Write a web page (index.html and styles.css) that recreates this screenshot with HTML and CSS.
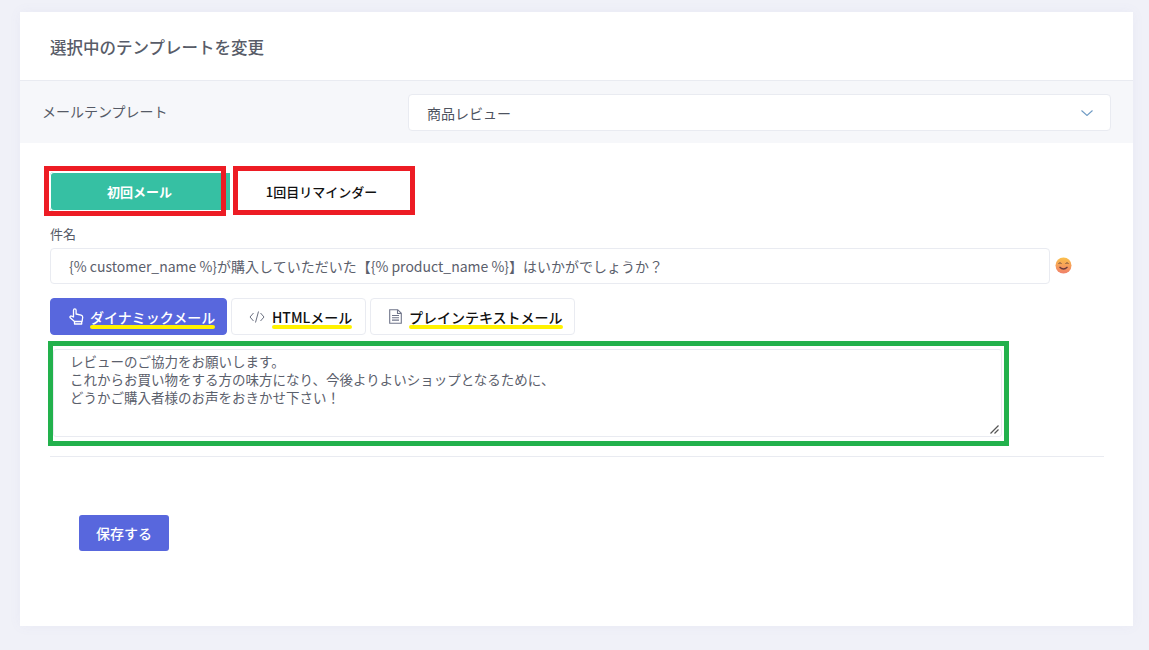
FILE: index.html
```html
<!DOCTYPE html>
<html lang="ja">
<head>
<meta charset="utf-8">
<title>選択中のテンプレートを変更</title>
<link rel="stylesheet" href="styles.css">
</head>
<body>
<main class="card">
  <h1 class="card-title">選択中のテンプレートを変更</h1>
  <section class="template-row">
    <span class="template-label">メールテンプレート</span>
    <div class="select">
      <span>商品レビュー</span>
      <svg class="chevron" width="12" height="6" viewBox="0 0 12 6"><path d="M.5.5 6 5.5 11.5.5" fill="none" stroke="#6f9bc4" stroke-width="1.1"/></svg>
    </div>
  </section>
  <section class="body">
    <div class="steps">
      <div class="step step-active">初回メール<i class="mark mark-a"></i></div>
      <div class="step">1回目リマインダー<i class="mark mark-b"></i></div>
    </div>
    <label class="subject-label">件名</label>
    <div class="subject-row">
      <div class="subject">{% customer_name %}が購入していただいた【{% product_name %}】はいかがでしょうか？</div>
      <svg class="emoji" width="17" height="17" viewBox="0 0 17 17">
        <defs><linearGradient id="f" x1="0" y1="0" x2="0" y2="1"><stop offset="0" stop-color="#fbc04a"/><stop offset="1" stop-color="#f0806a"/></linearGradient></defs>
        <circle cx="8.5" cy="8.5" r="8" fill="url(#f)"/>
        <path d="M3.5 7 5 5.5 6.5 7M10.5 7 12 5.5 13.5 7" fill="none" stroke="#6b4a3a" stroke-width="1"/>
        <path d="M4.5 10q4 4 8 0" fill="none" stroke="#6b3a3a" stroke-width="1.2"/>
      </svg>
    </div>
    <div class="tabs">
      <div class="tab tab-active">
        <svg class="tab-icon" width="15" height="17" viewBox="0 0 15 17"><path d="M4.5 9V2.2a1.3 1.3 0 0 1 2.6 0V6l5 1.2c1 .3 1.6 1 1.6 2l-.6 4.3H5.5L1.2 9.8c-.8-1 .4-2.3 1.5-1.6Z M5.5 13.5v2.5h7.2v-2.5" fill="none" stroke="#fff" stroke-width="1.3" stroke-linejoin="round"/></svg>
        <span class="hl">ダイナミックメール</span>
      </div>
      <div class="tab tab-html">
        <svg class="tab-icon" width="16" height="12" viewBox="0 0 16 12"><path d="M4.5 2 1 6l3.500 4M11.500 2 15 6l-3.500 4M9.500 .5l-3 11" fill="none" stroke="#6a6f80" stroke-width="1"/></svg>
        <span class="hl">HTMLメール</span>
      </div>
      <div class="tab tab-plain">
        <svg class="tab-icon" width="13" height="15" viewBox="0 0 13 15"><path d="M.7.7h8l3.600 3.600v10H.7ZM8.500.7v3.800h3.800M3 6.500h7M3 8.800h7M3 11.100h7" fill="none" stroke="#70758a" stroke-width="1.100"/></svg>
        <span class="hl">プレインテキストメール</span>
      </div>
    </div>
    <div class="editor">
      <p>レビューのご協力をお願いします。<br>これからお買い物をする方の味方になり、今後よりよいショップとなるために、<br>どうかご購入者様のお声をおきかせ下さい！</p>
      <svg class="resize" width="9" height="9" viewBox="0 0 9 9"><path d="M.5 8.500 8.500.5M4.500 8.500l4-4" stroke="#555" stroke-width="1.200"/></svg>
      <i class="mark mark-green"></i>
    </div>
    <hr class="rule">
    <button class="save" type="button">保存する</button>
  </section>
</main>
</body>
</html>
```
FILE: styles.css
```css
* { box-sizing: border-box; }
html, body { height: 100%; }
body {
  margin: 0;
  padding: 12px 16px 24px 20px;
  background: #f0f1f8;
  color: #555a66;
  font-family: "Noto Sans CJK JP", "Noto Sans", sans-serif;
  font-size: 14px;
  overflow: hidden;
}
.card {
  height: 614px;
  background: #fff;
  box-shadow: 0 0 12px rgba(120, 125, 180, .06);
}
.card-title {
  margin: 0;
  height: 68px;
  padding: 22px 30px 0;
  font-size: 16.5px;
  line-height: 27px;
  font-weight: 500;
  color: #585c68;
}
.template-row {
  height: 63px;
  border-top: 1px solid #e9ebf1;
  background: #f6f7fa;
  padding: 13px 22px 0;
  display: flex;
  justify-content: space-between;
}
.template-label { margin-left: 0; line-height: 35px; color: #555a66; }
.select {
  width: 703px;
  height: 37px;
  padding: 0 17px 0 18px;
  background: #fff;
  border: 1px solid #e9ebf1;
  border-radius: 4px;
  display: flex;
  align-items: center;
  justify-content: space-between;
  color: #4e535f;
}
.body { padding: 29px 30px 0; }
.steps { display: flex; height: 39px; }
.step {
  position: relative;
  width: 181px;
  display: flex;
  align-items: center;
  justify-content: center;
  font-size: 13px;
  font-weight: 500;
  color: #111;
  background: #fff;
}
.step-active {
  background: #36c0a3;
  color: #fff;
  font-weight: 700;
  border-radius: 4px 0 0 4px;
  box-shadow: inset 0 0 0 1px #fff;
  padding-right: 2px;
}
.mark { position: absolute; pointer-events: none; }
.mark-a { left: -6px; top: -6px; width: 182px; height: 50px; border: 5px solid #ed1c24; }
.mark-b { left: 2px; top: -6px; width: 182px; height: 49px; border: 5px solid #ed1c24; }
.subject-label { display: block; margin-top: 12px; height: 25px; line-height: 22px; font-size: 13px; color: #555a66; }
.subject-row { display: flex; align-items: center; gap: 5px; }
.subject {
  width: 1000px;
  height: 36px;
  padding: 0 18px;
  border: 1px solid #e9ebf1;
  border-radius: 4px;
  line-height: 34px;
  font-size: 14px;
  color: #5b606c;
  white-space: nowrap;
}
.emoji { margin-top: -2px; }
.tabs { display: flex; gap: 4px; margin-top: 14px; }
.tab {
  height: 37px;
  display: flex;
  align-items: center;
  gap: 6px;
  border: 1px solid #e9ebf1;
  border-radius: 4px;
  font-size: 14px;
  font-weight: 500;
  color: #111;
  background: #fff;
}
.tab-active { width: 177px; padding-left: 18px; background: #5867dd; border-color: #5867dd; color: #fff; }
.tab-html { width: 135px; padding-left: 17px; gap: 7px; }
.tab-plain { width: 205px; padding-left: 18px; gap: 7px; }
.tab-icon { flex: none; }
.hl {
  position: relative;
  display: inline-block;
  padding-top: 1px;
}
.hl::after {
  content: "";
  position: absolute;
  left: 0;
  right: 0;
  bottom: -2px;
  height: 4px;
  border-radius: 2px;
  background: #fff200;
}
.editor {
  position: relative;
  width: 949px;
  height: 88px;
  margin: 14px 0 0 3px;
  padding: 2px 0 0 16px;
  border: 1px solid #e9ebf1;
  border-radius: 3px;
  font-size: 13.5px;
  line-height: 18px;
  color: #5b606c;
}
.editor p { margin: 0; }
.resize { position: absolute; right: 2px; bottom: 2px; }
.mark-green { left: -6px; top: -9px; width: 961px; height: 105px; border: 5px solid #22b14c; }
.rule { width: 1054px; margin: 19px 0 0; border: 0; border-top: 1px solid #e9ebf1; }
.save {
  display: block;
  width: 90px;
  height: 36px;
  margin: 58px 0 0 29px;
  border: 0;
  border-radius: 3px;
  background: #5867dd;
  color: #fff;
  font: 500 14px "Noto Sans CJK JP", sans-serif;
}
```
